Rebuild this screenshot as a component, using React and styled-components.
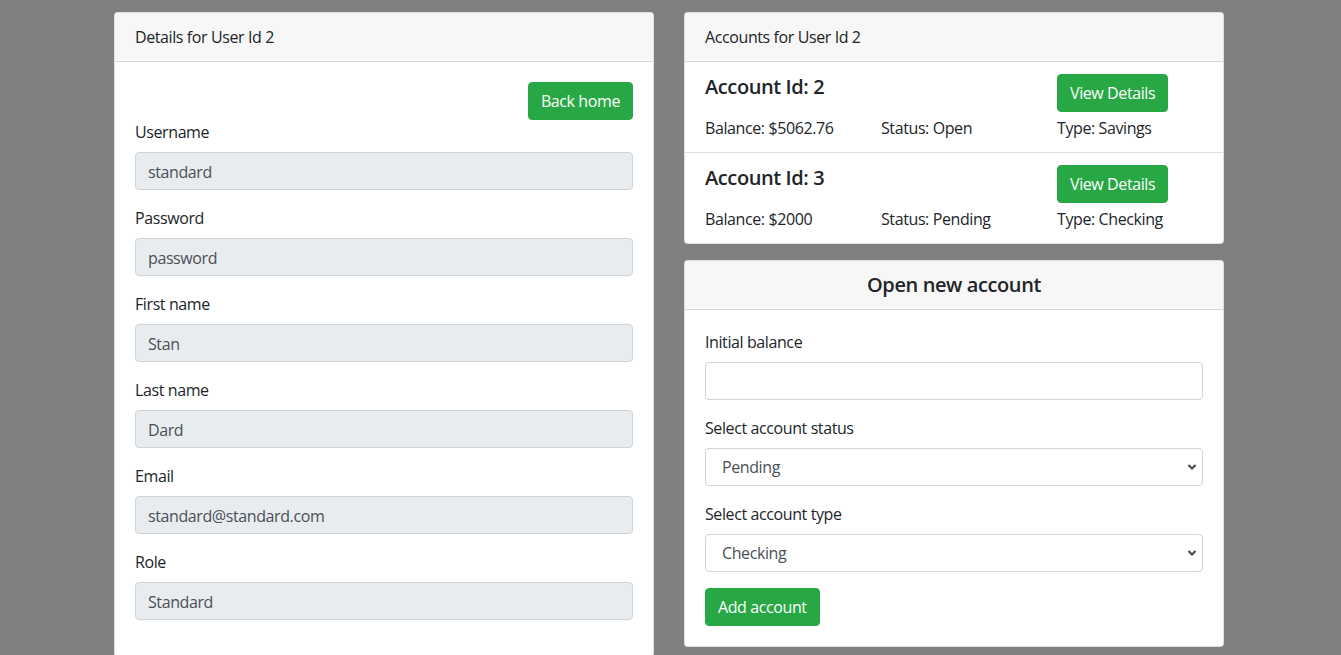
import React from 'react';
import styled, { createGlobalStyle } from 'styled-components';

const GlobalStyle = createGlobalStyle`
    html, body {
        margin: 0;
        padding: 0;
        background: #808080;
        overflow: hidden;
    }
    body {
        font-family: "Open Sans", "Noto Sans", sans-serif;
        font-size: 16px;
        line-height: 24px;
        letter-spacing: -0.4px;
        color: #212529;
    }
    * { box-sizing: border-box; }
`

const Page = styled.div`
    display: grid;
    grid-template-columns: 540px 540px;
    gap: 30px;
    align-items: start;
    padding: 12px 0 0 114px;
    height: 655px;
    overflow: hidden;
`

const Column = styled.div`
    display: flex;
    flex-direction: column;
    gap: 16px;
`

const Card = styled.div`
    background: #fff;
    border: 1px solid rgba(0, 0, 0, .125);
    border-radius: 4px;
    overflow: hidden;
    min-height: ${props => props.tall ? '645px' : 'auto'};
`

const CardHeader = styled.div`
    background: #f7f7f7;
    border-bottom: 1px solid rgba(0, 0, 0, .125);
    padding: 12px 20px;
    text-align: ${props => props.center ? 'center' : 'left'};
    font-size: ${props => props.big ? '20px' : '16px'};
    font-weight: ${props => props.big ? 600 : 400};
`

const CardBody = styled.div`
    padding: 20px;
`

const TopBar = styled.div`
    display: flex;
    justify-content: flex-end;
`

const Button = styled.button`
    font-family: inherit;
    font-size: 16px;
    line-height: 24px;
    letter-spacing: inherit;
    color: #fff;
    background: #28a745;
    border: 1px solid #28a745;
    border-radius: 4px;
    padding: 6px 12px;
    height: 38px;
    cursor: pointer;
`

const Group = styled.div`
    margin-bottom: 16px;
    &:last-child { margin-bottom: 0; }
`

const Label = styled.label`
    display: block;
    margin-bottom: 8px;
`

const Input = styled.input`
    display: block;
    width: 100%;
    height: 38px;
    padding: 7px 12px 5px;
    font-family: inherit;
    font-size: 16px;
    line-height: 24px;
    letter-spacing: inherit;
    color: #495057;
    background: ${props => props.disabled ? '#e9ecef' : '#fff'};
    border: 1px solid #ced4da;
    border-radius: 4px;
`

const SelectWrap = styled.div`
    position: relative;
`

const Select = styled.select`
    display: block;
    width: 100%;
    height: 38px;
    padding: 6px 12px 6px 16px;
    font-family: inherit;
    font-size: 16px;
    letter-spacing: inherit;
    color: #495057;
    background: #fff;
    border: 1px solid #ced4da;
    border-radius: 4px;
    appearance: none;
`

const Chevron = styled.svg`
    position: absolute;
    right: 6px;
    top: 15px;
    pointer-events: none;
`

const AccountItem = styled.div`
    padding: 12px 20px;
    border-bottom: 1px solid rgba(0, 0, 0, .125);
    &:last-child { border-bottom: none; }
`

const AccountRow = styled.div`
    display: grid;
    grid-template-columns: 176px 176px 1fr;
    margin-bottom: ${props => props.gap || 0}px;
`

const AccountTitle = styled.h5`
    margin: 0;
    font-size: 20px;
    font-weight: 600;
    line-height: 24px;
    padding-top: 1px;
`

const fields = [
    { label: 'Username', value: 'standard' },
    { label: 'Password', value: 'password' },
    { label: 'First name', value: 'Stan' },
    { label: 'Last name', value: 'Dard' },
    { label: 'Email', value: 'standard@standard.com' },
    { label: 'Role', value: 'Standard' },
]

const accounts = [
    { id: 2, balance: '5062.76', status: 'Open', type: 'Savings' },
    { id: 3, balance: '2000', status: 'Pending', type: 'Checking' },
]

const ChevronIcon = () => (
    <Chevron width="10" height="8" viewBox="0 0 10 8">
        <path d="M1.5 2 L5 5.5 L8.5 2" fill="none" stroke="#444" strokeWidth="2" />
    </Chevron>
)

const App = () => {
    return (
        <>
            <GlobalStyle />
            <Page>
                <Card tall>
                    <CardHeader>Details for User Id 2</CardHeader>
                    <CardBody>
                        <TopBar>
                            <Button>Back home</Button>
                        </TopBar>
                        {fields.map(f => (
                            <Group key={f.label}>
                                <Label>{f.label}</Label>
                                <Input disabled value={f.value} readOnly />
                            </Group>
                        ))}
                    </CardBody>
                </Card>
                <Column>
                    <Card>
                        <CardHeader>Accounts for User Id 2</CardHeader>
                        {accounts.map(a => (
                            <AccountItem key={a.id}>
                                <AccountRow gap={4}>
                                    <AccountTitle>Account Id: {a.id}</AccountTitle>
                                    <div />
                                    <div><Button>View Details</Button></div>
                                </AccountRow>
                                <AccountRow>
                                    <div>Balance: ${a.balance}</div>
                                    <div>Status: {a.status}</div>
                                    <div>Type: {a.type}</div>
                                </AccountRow>
                            </AccountItem>
                        ))}
                    </Card>
                    <Card>
                        <CardHeader center big>Open new account</CardHeader>
                        <CardBody>
                            <Group>
                                <Label>Initial balance</Label>
                                <Input />
                            </Group>
                            <Group>
                                <Label>Select account status</Label>
                                <SelectWrap>
                                    <Select defaultValue="Pending">
                                        <option>Open</option>
                                        <option>Pending</option>
                                    </Select>
                                    <ChevronIcon />
                                </SelectWrap>
                            </Group>
                            <Group>
                                <Label>Select account type</Label>
                                <SelectWrap>
                                    <Select defaultValue="Checking">
                                        <option>Checking</option>
                                        <option>Savings</option>
                                    </Select>
                                    <ChevronIcon />
                                </SelectWrap>
                            </Group>
                            <Group>
                                <Button>Add account</Button>
                            </Group>
                        </CardBody>
                    </Card>
                </Column>
            </Page>
        </>
    )
}

export default App
